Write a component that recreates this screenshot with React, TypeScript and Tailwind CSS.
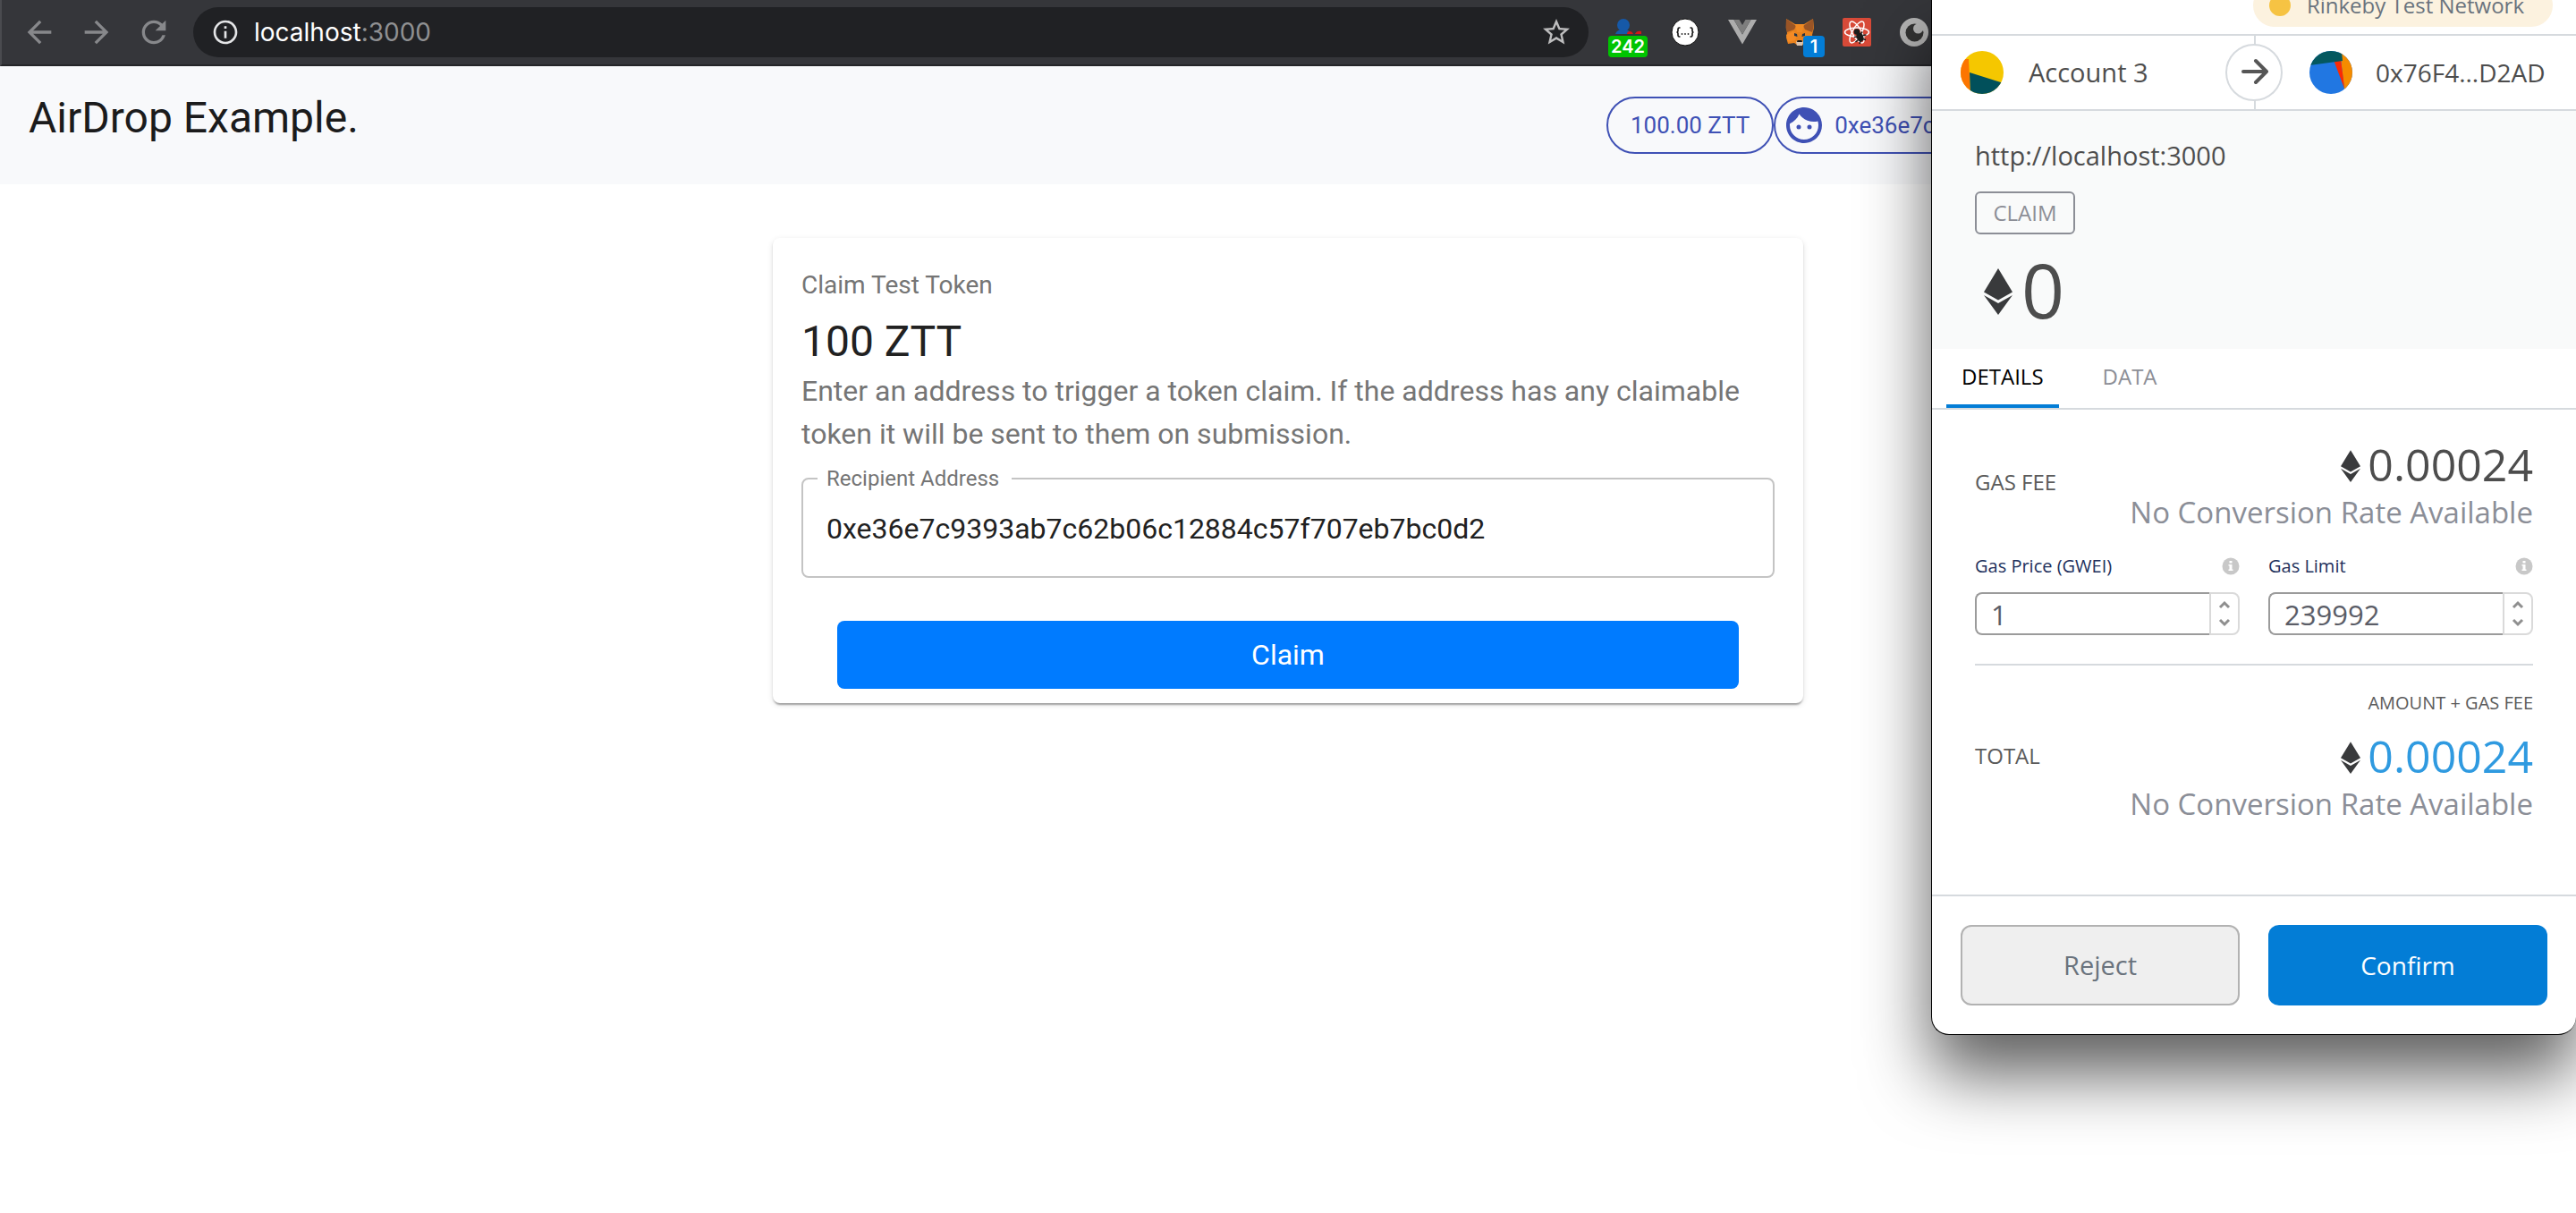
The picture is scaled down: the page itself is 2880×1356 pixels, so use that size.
import { MdArrowBack, MdArrowForward, MdFace, MdInfoOutline, MdRefresh, MdStarBorder } from "react-icons/md";

function ProfileIcon() {
  return (
    <svg viewBox="0 0 32 32" className="size-8" aria-hidden="true">
      <path d="M2 18c1-3 3-4 6-5l6 0c3 1 4 2 5 5z" fill="#1659a8" />
      <circle cx="11" cy="8" r="7" fill="#1659a8" />
      <path d="M15 18c0-2 1-3 3-3s3 1 4 3zM24 18c1-3 4-4 7-3l0 3z" fill="#d01818" />
    </svg>
  );
}

function BracesIcon() {
  return (
    <svg viewBox="0 0 32 32" className="size-8" aria-hidden="true">
      <circle cx="16" cy="16" r="15" fill="#fff" stroke="#0c0c0c" strokeWidth="1" />
      <g fill="none" stroke="#111" strokeWidth="1.6">
        <path d="M10.500 11H9.500c-1 0-1.500.5-1.500 1.500v2c0 .9-.5 1.500-1.500 1.500 1 0 1.500.6 1.500 1.500v2c0 1 .5 1.500 1.500 1.500h1" />
        <path d="M21.500 11h1c1 0 1.500.5 1.500 1.500v2c0 .9.5 1.500 1.500 1.500-1 0-1.500.6-1.500 1.500v2c0 1-.5 1.500-1.500 1.500h-1" />
      </g>
      <g fill="#222">
        <circle cx="12.500" cy="18" r="0.900" />
        <circle cx="16" cy="18" r="0.900" />
        <circle cx="19.500" cy="18" r="0.900" />
      </g>
    </svg>
  );
}

function VueIcon() {
  return (
    <svg viewBox="0 0 32 32" className="size-8" aria-hidden="true">
      <path d="M0 2h6.500L16 18.500 25.500 2H32L16 29.500z" fill="#adadad" />
      <path d="M6.500 2H12.500L16 8l3.500-6h6L16 18.500z" fill="#7e7e7e" />
    </svg>
  );
}

function FoxIcon() {
  return (
    <svg viewBox="0 0 32 32" className="size-8" aria-hidden="true">
      <path d="M1 1l10 6h10l10-6 1 10-2 8 1 4-3 7-6-2-4 3h-4l-4-3-7 1-2-7 1-5-1-7z" fill="#e8821e" />
      <path d="M1 1l11 8-2 4-8 3-1.500-5zM31 1L20 9l2 4 8 3 1.500-5z" fill="#9a5526" />
      <path d="M11 7h10l-2 9h-6z" fill="#f08a22" />
      <path d="M1 19l8-4 4 4-2 6-8 2z" fill="#f58b25" />
      <path d="M10 17l3 1 .5 3-3.500-1zM22 17l-3 1-.5 3 3.500-1z" fill="#233447" />
      <path d="M12 27l2-2h4l2 2-1 4h-6z" fill="#d8c3b0" />
      <path d="M13.500 25h5l.5 2h-6z" fill="#161616" />
    </svg>
  );
}

function ReactBugIcon() {
  return (
    <svg viewBox="0 0 32 32" className="size-8" aria-hidden="true">
      <rect width="32" height="32" rx="2" fill="#d84a38" />
      <g fill="none" stroke="#fff" strokeWidth="1.500">
        <ellipse cx="16" cy="16" rx="13.500" ry="5" />
        <ellipse cx="16" cy="16" rx="13.500" ry="5" transform="rotate(60 16 16)" />
        <ellipse cx="16" cy="16" rx="13.500" ry="5" transform="rotate(120 16 16)" />
      </g>
      <g fill="#1d1d1b" stroke="#1d1d1b" strokeWidth="1.600">
        <circle cx="16" cy="15.500" r="2.500" />
        <ellipse cx="19.500" cy="21.500" rx="3" ry="4.500" transform="rotate(-25 19.500 21.500)" />
        <path d="M13 21.500l3-.5M14.500 27l3-2.500M19 29l1-3M26.500 19l-4 .5M26 24.500l-3-1M22 15.500l-2 3" fill="none" />
      </g>
    </svg>
  );
}

function CrescentIcon() {
  return (
    <svg viewBox="0 0 32 32" className="size-8" aria-hidden="true">
      <circle cx="16" cy="16" r="16" fill="#b4b4b4" />
      <circle cx="16.500" cy="16.500" r="10" fill="#333" />
      <circle cx="20.500" cy="12" r="5.500" fill="#b4b4b4" />
      <path d="M20 5l8 3 0 7-4 -1z" fill="#b4b4b4" />
    </svg>
  );
}

function EthIcon({ className }: { className: string }) {
  return (
    <svg viewBox="0 0 32 52" className={className} aria-hidden="true">
      <path d="M16 0l16 26.500L16 35.500 0 26.500z" fill="#393a3c" />
      <path d="M0 30l16 9 16-9-16 22z" fill="#393a3c" />
    </svg>
  );
}

function AccountAvatar() {
  return (
    <svg viewBox="0 0 48 48" className="size-12 rounded-full" aria-hidden="true">
      <rect width="48" height="48" fill="#f5c700" />
      <path d="M0 9h9l2 39H0z" fill="#fc7500" />
      <path d="M10 24l38 12v12H11z" fill="#01505b" />
    </svg>
  );
}

function ContractAvatar() {
  return (
    <svg viewBox="0 0 48 48" className="size-12 rounded-full" aria-hidden="true">
      <rect width="48" height="48" fill="#2177e2" />
      <path d="M34 0h14v48l-9-6z" fill="#f58c00" />
      <path d="M27 10h8l3 22 1 10z" fill="#fb2a04" />
      <path d="M0 0h36l1 11-37 5z" fill="#04585f" />
    </svg>
  );
}

function InfoDot() {
  return (
    <svg viewBox="0 0 20 20" className="size-5" aria-hidden="true">
      <circle cx="10" cy="10" r="9.500" fill="#c8c8c8" />
      <path d="M8.500 4h3v2.500h-3zM7.500 8h4v5.500h1V15h-5v-1.500h1v-4h-1z" fill="#fff" />
    </svg>
  );
}

function Amount({ value, tone }: { value: string; tone: string }) {
  return (
    <div className="flex flex-col items-end">
      <div className={`flex items-center gap-2 text-[50px] leading-[60px] ${tone}`}>
        <EthIcon className="mt-1 h-9 w-[22px]" />
        <span>{value}</span>
      </div>
      <div className="text-[33px] leading-[48px] text-[#8b8e97]">No Conversion Rate Available</div>
    </div>
  );
}

function GasField({ id, label, value }: { id: string; label: string; value: string }) {
  return (
    <div className="min-w-0 flex-1">
      <div className="flex items-center justify-between">
        <label htmlFor={id} className="text-[20px] leading-7 text-[#22305c]">{label}</label>
        <InfoDot />
      </div>
      <div className="mt-[15px] flex h-12">
        <input
          id={id}
          type="text"
          defaultValue={value}
          className="min-w-0 flex-1 rounded-l-lg border-2 border-r-0 border-[#9b9b9b] bg-white px-4 pt-0.5 text-[31px] text-[#5b5d67] outline-none"
        />
        <div className="flex w-[34px] flex-col items-center justify-between rounded-r-lg border-2 border-[#dadada] py-[7px]">
          <button type="button" aria-label={`Increase ${label}`} className="flex">
            <svg viewBox="0 0 14 10" className="h-2.5 w-3.5"><path d="M2 8l5-5 5 5" fill="none" stroke="#8f8f8f" strokeWidth="3" /></svg>
          </button>
          <button type="button" aria-label={`Decrease ${label}`} className="flex">
            <svg viewBox="0 0 14 10" className="h-2.5 w-3.5"><path d="M2 2l5 5 5-5" fill="none" stroke="#8f8f8f" strokeWidth="3" /></svg>
          </button>
        </div>
      </div>
    </div>
  );
}

function BrowserBar() {
  return (
    <div className="flex h-[74px] items-center border-b-2 border-l-2 border-b-[#242528] border-l-[#4a4b4f] bg-[#35363a]">
      <div className="flex items-center gap-6 pr-6 pl-[22px] text-[#87888b]">
        <button type="button" aria-label="Back"><MdArrowBack className="size-10" /></button>
        <button type="button" aria-label="Forward"><MdArrowForward className="size-10" /></button>
        <button type="button" aria-label="Reload"><MdRefresh className="size-10" /></button>
      </div>
      <div className="flex h-14 flex-1 items-center rounded-full bg-[#202124] pr-[18px] pl-5">
        <MdInfoOutline className="size-8 text-[#e4e5e7]" />
        <div className="ml-4 flex-1 font-[Inter,sans-serif] text-[28px] text-white">
          localhost<span className="text-[#8f9092]">:3000</span>
        </div>
        <button type="button" aria-label="Bookmark"><MdStarBorder className="size-9 text-[#bdbdbe]" /></button>
      </div>
      <div className="flex w-[1104px] items-center gap-8 pl-7">
        <div className="relative">
          <ProfileIcon />
          <span className="absolute top-5 -left-1.5 h-6 w-11 rounded bg-[#00c400] text-center font-[Inter,sans-serif] text-[20px] leading-6 font-semibold text-white">242</span>
        </div>
        <BracesIcon />
        <VueIcon />
        <div className="relative">
          <FoxIcon />
          <span className="absolute top-5 left-5 size-6 rounded bg-[#037dd6] text-center font-[Inter,sans-serif] text-[20px] leading-6 font-semibold text-white">1</span>
        </div>
        <ReactBugIcon />
        <CrescentIcon />
      </div>
    </div>
  );
}

function SiteHeader() {
  return (
    <header className="flex h-[132px] items-center justify-between bg-[#f8f9fb] px-8">
      <h1 className="pb-4 text-[48px] leading-[64px] text-[#1b1b1c]">AirDrop Example.</h1>
      <div className="flex w-[1052px] text-[26px] text-[#3f51b5]">
        <div className="flex h-16 items-center rounded-full border-2 border-[#3f51b5] px-[25px] whitespace-nowrap">100.00 ZTT</div>
        <div className="flex h-16 min-w-0 flex-1 items-center gap-2.5 rounded-full border-2 border-[#3f51b5] pr-6 pl-2">
          <MdFace className="size-12 shrink-0" />
          <span className="truncate">0xe36e7c9393ab7c62b06c12884c57f707eb7bc0d2</span>
        </div>
      </div>
    </header>
  );
}

function ClaimCard() {
  return (
    <form className="mx-auto mt-[60px] w-2/5 rounded-lg bg-white pb-4 shadow-[0_4px_2px_-2px_rgba(0,0,0,0.2),0_2px_2px_rgba(0,0,0,0.14),0_2px_6px_rgba(0,0,0,0.12)]">
      <div className="px-8 pt-8">
        <p className="mb-2.5 text-[28px] leading-[42px] text-[#757575]">Claim Test Token</p>
        <h2 className="text-[48px] leading-[63px] text-[#212121]">100 ZTT</h2>
        <p className="text-[32px] leading-[48px] text-[#757575]">
          Enter an address to trigger a token claim. If the address has any claimable token it will be sent to them on submission.
        </p>
        <fieldset className="mt-3.5 rounded-lg border-2 border-[#c4c4c4] pb-[9px]">
          <legend className="ml-4 pr-3.5 pl-2.5 text-[24px] leading-6 text-[#757575]">
            <label htmlFor="recipient">Recipient Address</label>
          </legend>
          <input
            id="recipient"
            type="text"
            defaultValue="0xe36e7c9393ab7c62b06c12884c57f707eb7bc0d2"
            className="block h-[88px] w-full bg-transparent px-[26px] text-[32px] text-[#212121] outline-none"
          />
        </fieldset>
      </div>
      <div className="mt-12 px-[72px]">
        <button type="button" className="h-[76px] w-full rounded-lg bg-[#007bff] text-[32px] text-white">Claim</button>
      </div>
    </form>
  );
}

function WalletPopup() {
  return (
    <aside className="absolute top-0 right-0 w-[721px] overflow-hidden rounded-b-[20px] border-b border-l border-black bg-white font-['Open_Sans',sans-serif] shadow-[0_44px_76px_rgba(0,0,0,0.63)]">
      <div className="flex h-10 items-end justify-end overflow-hidden border-b-2 border-[#d6dade] pr-[26px] pb-2">
        <div className="flex h-12 items-center gap-[18px] rounded-full bg-[#fcf2df] pr-8 pl-[18px] text-[24px] text-[#6a737d]">
          <span className="size-6 rounded-full bg-[#f6c343]" />
          Rinkeby Test Network
        </div>
      </div>
      <div className="relative flex h-[84px] border-b-2 border-[#d6dade] text-[#4d4d4d]">
        <div className="flex w-1/2 items-center gap-7 pl-8 text-[29px]">
          <AccountAvatar />
          Account 3
        </div>
        <div className="flex w-1/2 items-center gap-[26px] border-l-2 border-[#d6dade] pl-[60px] text-[28px]">
          <ContractAvatar />
          0x76F4...D2AD
        </div>
        <div className="absolute inset-0 m-auto flex size-16 items-center justify-center rounded-full border-2 border-[#d6dade] bg-white">
          <svg viewBox="0 0 32 32" className="size-8" aria-hidden="true">
            <path d="M4 15h26M18 3l12 12-12 12" fill="none" stroke="#565656" strokeWidth="4" strokeLinecap="round" strokeLinejoin="round" />
          </svg>
        </div>
      </div>
      <div className="bg-[#f9fafa] px-12 pt-[30px] pb-4 text-[#4d4d4d]">
        <div className="text-[29px] leading-10">http://localhost:3000</div>
        <div className="mt-5 flex h-12 w-28 items-center justify-center rounded-md border-2 border-[#8c8e96] text-[24px] text-[#8c8e96]">CLAIM</div>
        <div className="mt-3 flex items-center gap-2.5 pl-2.5 text-[84px] leading-[100px]">
          <EthIcon className="mt-1 h-[52px] w-8" />0
        </div>
      </div>
      <div role="tablist" className="flex gap-8 border-b-2 border-[#d6dade] pl-4 text-[24px]">
        <button type="button" role="tab" aria-selected="true" className="h-[66px] border-b-4 border-[#037dd6] px-[17px] text-black">DETAILS</button>
        <button type="button" role="tab" aria-selected="false" className="h-[66px] border-b-4 border-transparent px-[17px] text-[#8c8e96]">DATA</button>
      </div>
      <div className="px-12 pt-[31px] pb-[77px]">
        <div className="flex items-center justify-between">
          <div className="pb-2 text-[24px] text-[#5b5b5b]">GAS FEE</div>
          <Amount value="0.00024" tone="text-[#4d4d4d]" />
        </div>
        <div className="mt-[22px] flex gap-8 border-b-2 border-[#d6dade] pb-8">
          <GasField id="gas-price" label="Gas Price (GWEI)" value="1" />
          <GasField id="gas-limit" label="Gas Limit" value="239992" />
        </div>
        <div className="mt-7 text-right text-[20px] leading-7 text-[#5b5b5b]">AMOUNT + GAS FEE</div>
        <div className="mt-[15px] flex items-start justify-between">
          <div className="text-[24px] leading-[60px] text-[#5b5b5b]">TOTAL</div>
          <Amount value="0.00024" tone="text-[#2f9ae0]" />
        </div>
      </div>
      <div className="grid grid-cols-2 gap-8 border-t-2 border-[#d6dade] p-8">
        <button type="button" className="h-[90px] rounded-xl border-2 border-[#b2b2b2] bg-[#efefef] text-[29px] text-[#6a737d]">Reject</button>
        <button type="button" className="h-[90px] rounded-xl bg-[#037dd6] text-[28px] text-white">Confirm</button>
      </div>
    </aside>
  );
}

export default function App() {
  return (
    <div className="relative min-h-screen overflow-hidden bg-white font-[Roboto,sans-serif]">
      <BrowserBar />
      <SiteHeader />
      <main>
        <ClaimCard />
      </main>
      <WalletPopup />
    </div>
  );
}
